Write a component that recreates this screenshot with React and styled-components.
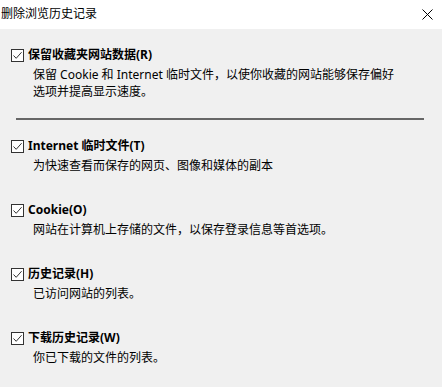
import React from "react";
import styled, { createGlobalStyle } from "styled-components";

const GlobalStyle = createGlobalStyle`
  html, body {
    margin: 0;
    padding: 0;
    background: #f0f0f0;
  }
  body {
    font-family: "Noto Sans", "Noto Sans CJK SC", sans-serif;
    font-size: 12px;
    color: #000;
  }
`;

const Janela = styled.div`
  width: 442px;
  height: 387px;
  background: #f0f0f0;
  overflow: hidden;
`;

const BarraTitulo = styled.div`
  height: 29px;
  background: #ffffff;
  display: flex;
  align-items: center;
  justify-content: space-between;
  padding: 0 9px 0 1px;
  box-sizing: border-box;
`;

const Titulo = styled.span`
  font-size: 12px;
  line-height: 16px;
  margin-top: -1px;
`;

const BotaoFechar = styled.button`
  width: 12px;
  height: 12px;
  padding: 0;
  border: none;
  background: none;
  display: flex;
  align-items: center;
  justify-content: center;
`;

const Conteudo = styled.div`
  padding: 16px 0 0 11px;
`;

const Secao = styled.div`
  margin-top: ${(p) => p.$topo}px;
`;

const LinhaOpcao = styled.label`
  display: flex;
  align-items: center;
  height: 20px;
  gap: 4px;
`;

const Caixa = styled.span`
  width: 13px;
  height: 13px;
  box-sizing: border-box;
  border: 1px solid #333333;
  background: #ffffff;
  display: flex;
  align-items: center;
  justify-content: center;
`;

const Rotulo = styled.span`
  font-weight: 700;
  font-size: 12px;
  line-height: 20px;
`;

const Descricao = styled.p`
  margin: 1px 0 0 22px;
  font-size: 12px;
  line-height: 17px;
  white-space: nowrap;
`;

const LinhaDivisoria = styled.hr`
  border: none;
  border-top: 2px solid #666666;
  margin: 18px 0 0 5px;
  width: 408px;
  height: 0;
`;

const IconeCheck = () => (
  <svg width="11" height="11" viewBox="0 0 11 11">
    <path d="M1.5 5.5 L4.2 8.3 L9.6 2.2" fill="none" stroke="#333" strokeWidth="1" />
  </svg>
);

const IconeFechar = () => (
  <svg width="11" height="11" viewBox="0 0 11 11">
    <path d="M0.5 0.5 L10.5 10.5 M10.5 0.5 L0.5 10.5" stroke="#000" strokeWidth="1" />
  </svg>
);

const Opcao = ({ titulo, children, topo }) => (
  <Secao $topo={topo}>
    <LinhaOpcao>
      <Caixa>
        <IconeCheck />
      </Caixa>
      <Rotulo>{titulo}</Rotulo>
    </LinhaOpcao>
    <Descricao>{children}</Descricao>
  </Secao>
);

export default function App() {
  return (
    <Janela>
      <GlobalStyle />
      <BarraTitulo>
        <Titulo>删除浏览历史记录</Titulo>
        <BotaoFechar>
          <IconeFechar />
        </BotaoFechar>
      </BarraTitulo>
      <Conteudo>
        <Opcao titulo="保留收藏夹网站数据(R)" topo={0}>
          保留 Cookie 和 Internet 临时文件，以使你收藏的网站能够保存偏好
          <br />
          选项并提高显示速度。
        </Opcao>
        <LinhaDivisoria />
        <Opcao titulo="Internet 临时文件(T)" topo={16}>
          为快速查看而保存的网页、图像和媒体的副本
        </Opcao>
        <Opcao titulo="Cookie(O)" topo={26}>
          网站在计算机上存储的文件，以保存登录信息等首选项。
        </Opcao>
        <Opcao titulo="历史记录(H)" topo={26}>
          已访问网站的列表。
        </Opcao>
        <Opcao titulo="下载历史记录(W)" topo={26}>
          你已下载的文件的列表。
        </Opcao>
      </Conteudo>
    </Janela>
  );
}
